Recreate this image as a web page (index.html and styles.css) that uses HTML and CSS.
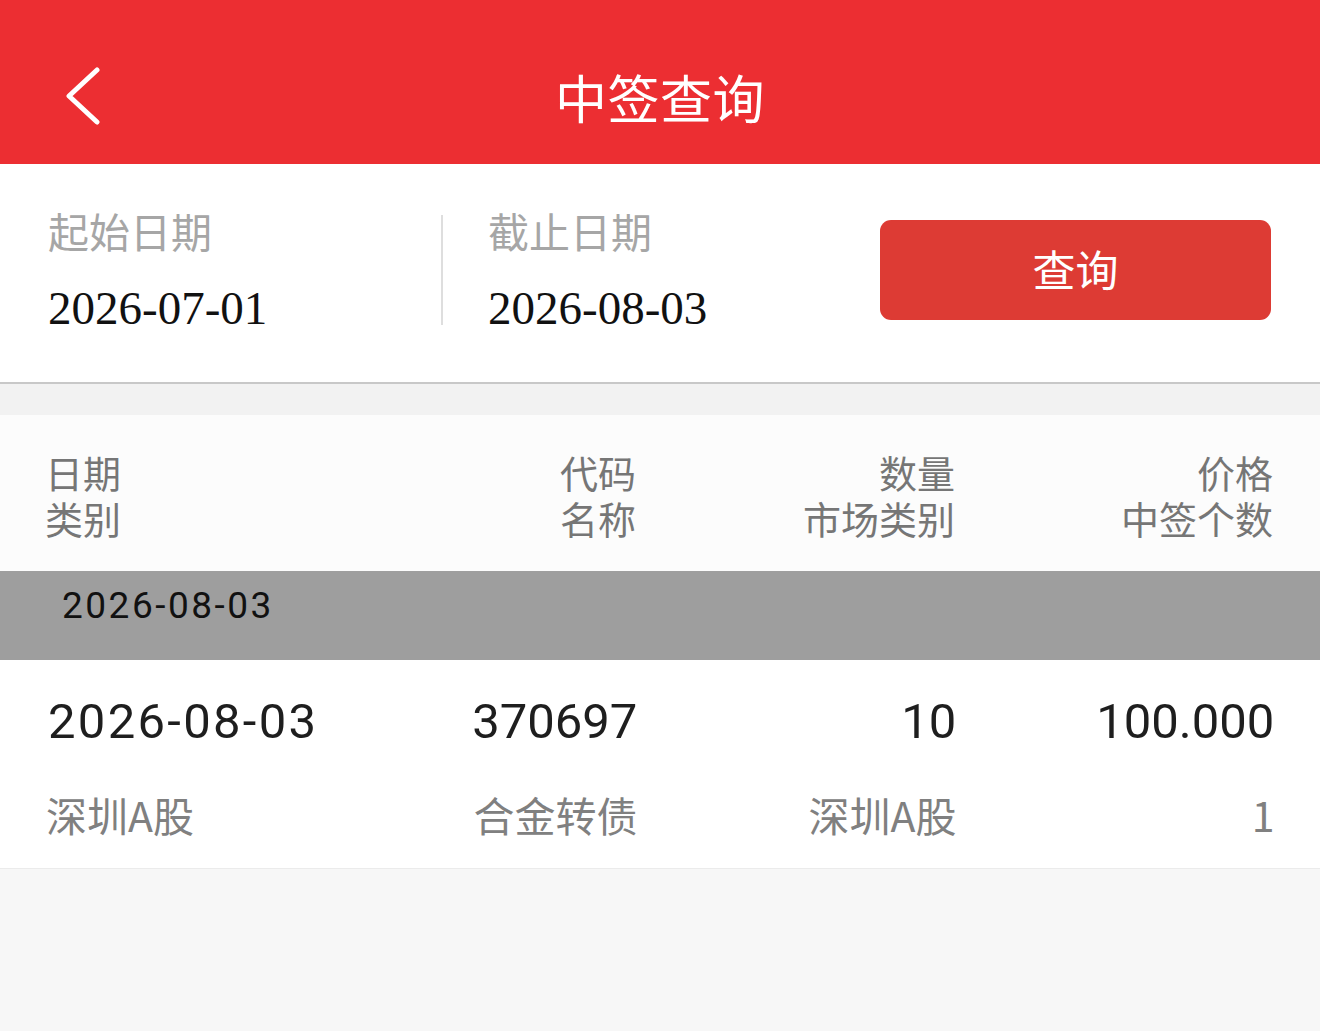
FILE: index.html
```html
<!DOCTYPE html>
<html lang="zh-CN">
<head>
<meta charset="utf-8">
<title>中签查询</title>
<link rel="stylesheet" href="styles.css">
</head>
<body>
<header class="topbar">
  <div class="topbar-left">
    <svg class="back-icon" width="40" height="60" viewBox="0 0 40 60" aria-hidden="true">
      <polyline points="33,3 5,29 33,55" fill="none" stroke="#ffffff" stroke-width="5" stroke-linecap="round" stroke-linejoin="round"/>
    </svg>
  </div>
  <h1 class="title">中签查询</h1>
  <div class="topbar-right"></div>
</header>

<section class="date-panel">
  <div class="date-field first">
    <div class="date-label">起始日期</div>
    <div class="date-value">2026-07-01</div>
  </div>
  <div class="divider"></div>
  <div class="date-field second">
    <div class="date-label">截止日期</div>
    <div class="date-value">2026-08-03</div>
  </div>
  <button class="query-btn">查询</button>
</section>

<div class="spacer"></div>

<section class="table-head">
  <div class="cell left">日期</div>
  <div class="cell">代码</div>
  <div class="cell">数量</div>
  <div class="cell">价格</div>
  <div class="cell left">类别</div>
  <div class="cell">名称</div>
  <div class="cell">市场类别</div>
  <div class="cell">中签个数</div>
</section>

<div class="group-row">2026-08-03</div>

<section class="data-row">
  <div class="cell left primary">2026-08-03</div>
  <div class="cell primary">370697</div>
  <div class="cell primary">10</div>
  <div class="cell primary">100.000</div>
  <div class="cell left secondary">深圳A股</div>
  <div class="cell secondary">合金转债</div>
  <div class="cell secondary">深圳A股</div>
  <div class="cell secondary">1</div>
</section>
</body>
</html>
```
FILE: styles.css
```css
* { box-sizing: border-box; }
html, body { margin: 0; padding: 0; }
body {
  background: #f7f7f7;
  font-family: Roboto, "Noto Sans CJK SC", sans-serif;
  min-height: 1031px;
}

.topbar {
  height: 164px;
  padding-top: 30px;
  background: #ec2e32;
  display: grid;
  grid-template-columns: 1fr auto 1fr;
  align-items: center;
}
.topbar-left {
  padding-left: 64px;
  display: flex;
  align-items: center;
}
.title {
  margin: 0;
  color: #ffffff;
  font-family: "Noto Sans CJK SC", sans-serif;
  font-size: 52px;
  font-weight: 400;
  line-height: 1;
  letter-spacing: 0.5px;
}

.date-panel {
  height: 220px;
  background: #ffffff;
  border-bottom: 2px solid #c8c8c8;
  display: flex;
  align-items: center;
}
.date-field {
  display: flex;
  flex-direction: column;
  gap: 26px;
  margin-top: -4px;
  flex-shrink: 0;
}
.date-field.first { width: 441px; padding-left: 48px; }
.date-field.second { width: 437px; padding-left: 45px; }
.date-label {
  font-family: "Noto Sans CJK SC", sans-serif;
  font-size: 41px;
  line-height: 48px;
  color: #a6a6a6;
}
.date-value {
  font-family: "Liberation Serif", "Times New Roman", serif;
  font-size: 47px;
  line-height: 56px;
  color: #111111;
}
.divider {
  width: 2px;
  height: 110px;
  background: #dedede;
  flex-shrink: 0;
  margin-top: -6px;
}
.query-btn {
  width: 391px;
  height: 100px;
  flex-shrink: 0;
  margin-top: -6px;
  border: none;
  border-radius: 11px;
  background: #dd3b34;
  color: #ffffff;
  font-family: "Noto Sans CJK SC", sans-serif;
  font-size: 43px;
  line-height: 1;
  padding: 0 0 4px;
}

.spacer {
  height: 31px;
  background: #f2f2f2;
}

.table-head,
.data-row {
  display: grid;
  grid-template-columns: 1fr 319px 319px 318px;
  padding: 0 47px 0 48px;
}
.cell { text-align: right; white-space: nowrap; }
.cell.left { text-align: left; }

.table-head {
  background: #fcfcfc;
  padding-top: 34px;
  padding-bottom: 30px;
  height: 156px;
  font-family: "Noto Sans CJK SC", sans-serif;
  font-size: 38px;
  line-height: 46px;
  color: #767676;
}
.table-head .cell.left { margin-left: -3px; }

.group-row {
  height: 89px;
  background: #9e9e9e;
  padding: 13px 0 0 62px;
  font-size: 37px;
  line-height: 44px;
  color: #111111;
  letter-spacing: 2.5px;
}

.data-row {
  background: #ffffff;
  border-bottom: 1px solid #ebebeb;
  padding-top: 32px;
  padding-bottom: 29px;
  row-gap: 37px;
}
.primary {
  font-size: 49px;
  line-height: 60px;
  color: #1e1e1e;
}
.primary.left { letter-spacing: 2.3px; }
.secondary {
  font-size: 41px;
  line-height: 50px;
  color: #808080;
  font-family: "Noto Sans CJK SC", sans-serif;
}
.secondary.left { margin-left: -2px; }
```
